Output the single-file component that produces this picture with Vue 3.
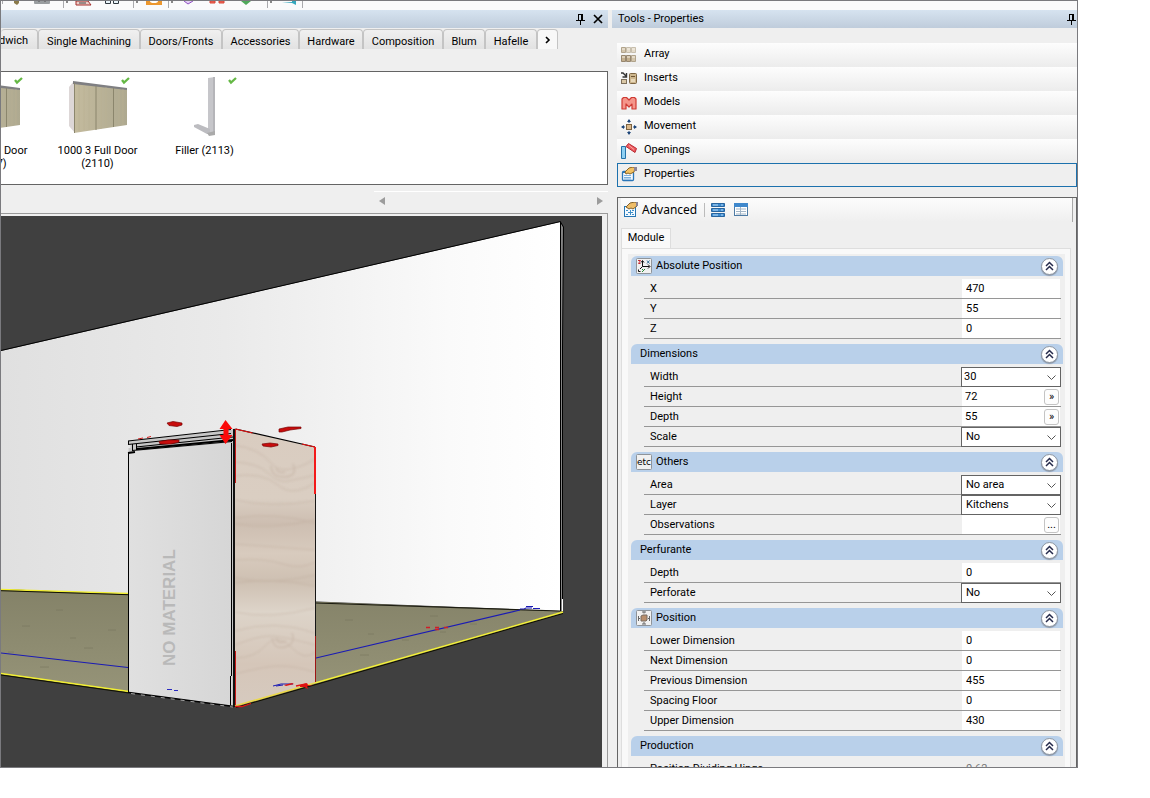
<script setup>
import { reactive, ref } from 'vue'

const tabs = ['Sandwich', 'Single Machining', 'Doors/Fronts', 'Accessories', 'Hardware', 'Composition', 'Blum', 'Hafelle']
const tools = ['Array', 'Inserts', 'Models', 'Movement', 'Openings', 'Properties']
const active = ref('Properties')

const items = [
  { name: '600 2 Full Door (2107)', kind: 'cabinet' },
  { name: '1000 3 Full Door (2110)', kind: 'cabinet' },
  { name: 'Filler (2113)', kind: 'filler' }
]

const sections = reactive([
  { title: 'Absolute Position', icon: 'axes', rows: [
    { label: 'X', value: '470' }, { label: 'Y', value: '55' }, { label: 'Z', value: '0' }] },
  { title: 'Dimensions', rows: [
    { label: 'Width', value: '30', options: ['30', '45', '60'], tight: true },
    { label: 'Height', value: '72', button: '»' },
    { label: 'Depth', value: '55', button: '»' },
    { label: 'Scale', value: 'No', options: ['No', 'Yes'] }] },
  { title: 'Others', icon: 'etc', rows: [
    { label: 'Area', value: 'No area', options: ['No area'] },
    { label: 'Layer', value: 'Kitchens', options: ['Kitchens'] },
    { label: 'Observations', value: '', button: '...' }] },
  { title: 'Perfurante', rows: [
    { label: 'Depth', value: '0' },
    { label: 'Perforate', value: 'No', options: ['No', 'Yes'] }] },
  { title: 'Position', icon: 'position', rows: [
    { label: 'Lower Dimension', value: '0' }, { label: 'Next Dimension', value: '0' },
    { label: 'Previous Dimension', value: '455' }, { label: 'Spacing Floor', value: '0' },
    { label: 'Upper Dimension', value: '430' }] },
  { title: 'Production', rows: [{ label: 'Position Dividing Hinge', value: '0.62', muted: true }] }
])
</script>

<template>
  <div class="window">
    <div class="strip">
      <svg width="310" height="9" viewBox="1 1 310 9" aria-hidden="true">
        <path d="M2.500 1v3M63.500 1v7M133.500 1v7M168.500 1v7M267.500 1v7M302.500 1v7" stroke="#a9a9ad" fill="none" />
        <path d="M66 1h2v2h-2zM136 1h2v2h-2zM171 1h2v2h-2zM270 1h2v2h-2z" fill="#888" />
        <path d="M14 1h5v2l-2 2-3-2z" fill="#8a7a4a" />
        <rect x="34" y="0" width="16" height="4" rx="1" fill="#999da0" /><path d="M38 1h2M44 1h2" stroke="#555" />
        <path d="M76 1h12l3 4H76z" fill="#eccfca" stroke="#a42c2a" /><path d="M79 3h7" stroke="#444" />
        <path d="M105.500 0v3.500h5V0M113.500 0v3.500h5V0" fill="#e8f4fa" stroke="#303840" />
        <rect x="146" y="1" width="16" height="4" fill="#ec972e" /><ellipse cx="154" cy="1" rx="4" ry="2" fill="#fff" />
        <path d="M184 1l4 3 5-3" fill="#e3d0f5" stroke="#8f4fc2" />
        <path d="M210 1h5v2h-5zM219 1h5v2h-5z" fill="#ef6a5c" stroke="#d84638" />
        <path d="M241 1h10l-5 4z" fill="#4fa85a" />
        <path d="M282 2h10v-1l4 0v4l-4-2" fill="#35a7bd" />
      </svg>
    </div>

    <main class="work">
      <section class="library" aria-label="Library">
        <header class="caption">
          <button class="cap-btn" aria-label="Pin library">
            <svg width="9" height="12" viewBox="0 0 9 12"><path d="M2.500 1v6M2 1.500h4M5.500 1v6M6.500 1v6M0 7.500h9M4.500 8v4" stroke="#000" fill="none" /></svg>
          </button>
          <button class="cap-btn" aria-label="Close library">
            <svg width="10" height="10" viewBox="0 0 10 10"><path d="M1 1l8 8M9 1l-8 8" stroke="#000" stroke-width="1.700" /></svg>
          </button>
        </header>

        <nav class="tabs">
          <button v-for="t in tabs" :key="t" class="tab" :class="{ cut: t === 'Sandwich' }">{{ t }}</button>
          <button class="tab more" aria-label="More tabs">
            <svg width="6" height="8" viewBox="0 0 6 8"><path d="M1 1l3 3-3 3" fill="none" stroke="#000" stroke-width="1.600" /></svg>
          </button>
        </nav>

        <div class="shelf">
          <figure v-for="it in items" :key="it.name" class="item">
            <svg width="107" height="66" viewBox="44 75 107 66" aria-hidden="true">
              <defs>
                <linearGradient id="oak" x1="0" x2="1"><stop offset="0" stop-color="#c4bb9e" /><stop offset="1" stop-color="#aea990" /></linearGradient>
              </defs>
              <g v-if="it.kind === 'cabinet'">
                <path d="M69 88l5-6 1 52-6-7z" fill="#ddd7d7" />
                <path d="M74 84l53 6v36l-53 8z" fill="url(#oak)" />
                <path d="M73 82l54 7v2l-54-6z" fill="#7f7f82" />
                <path d="M96 87v44M113.500 89v39M74.500 84v50" stroke="#8b866d" fill="none" />
                <path d="M79 86v46M84 86v45M89 87v44M101 88v42M106 88v41M119 90v37M123 90v36" stroke="#b9b092" opacity=".6" />
              </g>
              <g v-else>
                <path d="M101 79l7-1v55l-7 2z" fill="#c6c6ca" /><path d="M106 78h2v56l-2 1z" fill="#b5b5b9" />
                <path d="M87 126l4-1 12 5v5l-3 0-13-7z" fill="#bcbcc0" /><path d="M100 134l8-2v4l-6 1z" fill="#aaa" />
              </g>
              <path d="M122 81l2 2.500 5-4.500" fill="none" stroke="#65b845" stroke-width="2.300" />
            </svg>
            <figcaption>{{ it.name }}</figcaption>
          </figure>
        </div>

        <div class="scroller">
          <div class="track">
            <button class="arrow" aria-label="Scroll left"><svg width="7" height="8" viewBox="0 0 7 8"><path d="M6 0v8L0 4z" fill="#9c9c9c" /></svg></button>
            <button class="arrow" aria-label="Scroll right"><svg width="7" height="8" viewBox="0 0 7 8"><path d="M0 0v8l6-4z" fill="#9c9c9c" /></svg></button>
          </div>
        </div>

        <div class="viewport">
          <svg class="scene" viewBox="1 216 601 551" preserveAspectRatio="xMinYMin slice" role="img" aria-label="Cabinet in a room">
            <defs>
              <linearGradient id="wall" x1="0" x2="1"><stop offset="0" stop-color="#e0e0e0" /><stop offset=".4" stop-color="#eaeaea" /><stop offset=".8" stop-color="#fafafa" /><stop offset="1" stop-color="#fff" /></linearGradient>
              <linearGradient id="floor" x1="0" x2="0" y1="0" y2="1"><stop offset="0" stop-color="#848268" /><stop offset="1" stop-color="#98967a" /></linearGradient>
              <linearGradient id="front" x1="0" x2="1"><stop offset="0" stop-color="#e0e0e0" /><stop offset="1" stop-color="#d6d6d6" /></linearGradient>
              <linearGradient id="wood" x1="0" x2="0" y1="0" y2="1">
                <stop offset="0" stop-color="#d9ccc0" /><stop offset=".25" stop-color="#dacec2" /><stop offset=".34" stop-color="#cdbeb1" />
                <stop offset=".45" stop-color="#d8cbbe" /><stop offset=".55" stop-color="#cec0b2" /><stop offset=".66" stop-color="#ddd4c9" />
                <stop offset=".85" stop-color="#d5c6b9" /><stop offset="1" stop-color="#d6cabf" />
              </linearGradient>
              <filter id="soft"><feGaussianBlur stdDeviation="1" /></filter>
              <clipPath id="side"><path d="M235 429l80 18v236l-80 23z" /></clipPath>
            </defs>
            <rect x="1" y="216" width="1200" height="1100" fill="#404040" />
            <path d="M1 351L560 222V611L1 589z" fill="url(#wall)" />
            <path d="M560 222l3 5v384h-3z" fill="#858585" />
            <path d="M1 350.500L560.500 221.500V611M560.500 222l3 5-1 120v264" fill="none" stroke="#000" />
            <path d="M562.500 599v12" stroke="#fff" />
            <path d="M1 589l562 22.500L234 706 1 674z" fill="url(#floor)" />
            <path d="M316 603l244 8" stroke="#1c1c10" stroke-width="1.200" />
            <path d="M1 589.500l127 4M1 673.500l128 18" stroke="#f2ef32" stroke-width="1.400" fill="none" />
            <path d="M1 590.700l127 4M1 675l128 18M563 613.500L236 707.500" stroke="#101000" fill="none" />
            <path d="M563 612L315 683" stroke="#f5f23a" stroke-width="1.500" />
            <path d="M8 652h6M22 626h8M56 610h7M84 648h9M40 667h9M70 638h6M108 630h8M345 620h8M368 634h6M402 640h7M430 616h8M360 655h9M470 624h7M440 632h6" stroke="#77755c" opacity=".6" />
            <path d="M1 653l127 14.500M316 658l204-48M520 609h4l2-1h6M526 606.500h7M533 608.500h7" stroke="#1b1bb4" stroke-width="1.100" fill="none" />
            <path d="M426 627.500h4M435 627.500h4M435 629.500h4M444 627.500h4" stroke="#d01c28" stroke-width="1.600" />

            <path d="M128.500 441L231 430l4-2v278h-3V443l-103.500 9v-4h2v-3l-2-1z" fill="#c7c7c7" />
            <path d="M128.500 452.500L232 443v263l-103.500-13.500z" fill="url(#front)" />
            <path d="M128.500 453v240M231.500 443v233M230.500 676v29" stroke="#000" />
            <path d="M128 441l103-11.500M128 444.500l103-11M136 447l97-10M132 450.500l100-9" stroke="#000" stroke-width="1.200" fill="none" />
            <path d="M128.500 441v3M132.500 444v7M136.500 444v6" stroke="#000" />
            <path d="M128 453l7-1M137 449l96-9" stroke="#000" stroke-width="2" />
            <path d="M129 692.500l105 14" stroke="#000" stroke-width="1.300" />
            <path d="M131 693.500l102 13.500" stroke="#ddd" stroke-dasharray="4 6" stroke-width=".7" />
            <text class="watermark" transform="translate(175 666) rotate(-90)">NO MATERIAL</text>

            <path d="M235 429l80 18v236l-80 23z" fill="url(#wood)" />
            <g clip-path="url(#side)" fill="none" stroke="#b9a595" filter="url(#soft)" opacity=".42">
              <path d="M233 445q26 3 38 18t44-4M234 462q24 1 34 11t20 8 28-6M233 476q30-4 45 9t38-3M235 500q35 8 80 1M235 518q40-6 80 5M235 524q35 6 80-4M235 544q42 3 80 6M235 560q30-2 48 4t32-2M235 578q40 7 80-3M235 583q38-6 80 3M235 612q34 8 80-4M235 631q40-12 80 2M235 645q25-10 38-9t42 9M235 658q20 0 31-13t25 2 24 5M235 674q30-8 45-8t35 6" />
              <path d="M271 466q1 12 14 11t8-13M276 468q2 6 9 4M272 638q2 12 13 9t7-14M276 638q2 7 10 3" stroke-width="1.500" />
            </g>
            <path d="M235.500 429L315 447" stroke="#000" stroke-width="1.100" />
            <path d="M235.500 429l17 4M302 444l13 3" stroke="#e80e0e" stroke-width="1.200" />
            <path d="M315.500 447v235" stroke="#161616" />
            <path d="M315 447v47" stroke="#f31a1a" stroke-width="2" />
            <path d="M315.500 636v46" stroke="#9e1515" />
            <path d="M234 429v278" stroke="#111" stroke-width="2" />
            <path d="M235.500 429v54M235.500 651v56" stroke="#c91919" />
            <path d="M235 706l80-23" stroke="#ecd94a" stroke-width="1.700" /><path d="M235 706.500h7l9-3M296 686l10-2" stroke="#dc1616" stroke-width="1.300" fill="none" />
            <g fill="#c80c0c" stroke="#780505" stroke-width=".7">
              <path d="M167 423l6-1.500 9 1.500v2l-5 1.500-8-1z" /><path d="M159 441.500l9-1.500 11 0v2l-8 2-11 0z" />
              <path d="M262 444l8-1 8 1v1.500l-7 1.500-8-1z" /><path d="M279 429l9-2h13v1.500l-11 1.500-8 2h-3z" />
            </g>
            <path d="M225.500 420l7 9h-4v6h4l-7 9-6-9h4v-6h-4z" fill="#fb0a0a" />
            <path d="M273 686l8-2h12M276 686l7-1" stroke="#1b1bb4" fill="none" /><path d="M284 685l8-2 2 1-8 2zM300 685l7-2 1 2 5 1-6 0 1 3-4-2h-4z" fill="#df1212" />
            <path d="M167 689.500h5M174 690.500h4" stroke="#2929c0" />
            <path d="M138 439l5-1M147 437.500l4-1" stroke="#d41c1c" />
          </svg>
        </div>
      </section>

      <aside class="props" aria-label="Tools - Properties">
        <header class="caption title">
          <h1>Tools - Properties</h1>
          <button class="cap-btn" aria-label="Pin properties">
            <svg width="9" height="12" viewBox="0 0 9 12"><path d="M2.500 1v6M2 1.500h4M5.500 1v6M6.500 1v6M0 7.500h9M4.500 8v4" stroke="#000" fill="none" /></svg>
          </button>
        </header>

        <nav class="tools">
          <button v-for="t in tools" :key="t" class="tool" :class="{ on: t === active }" @click="active = t">
            <svg width="16" height="16" viewBox="0 0 16 16" aria-hidden="true">
              <template v-if="t === 'Array'">
                <g stroke-width=".8">
                  <path d="M.5 8.500h4v6h-4zM5.500 8.500h4v6h-4z" fill="#c3af8e" stroke="#85745a" /><path d="M10.500 8.500h4v6h-4zM.5 .5h4v5h-4z" fill="#d3c5ac" stroke="#a3947a" /><path d="M5.500 .5h4v5h-4zM10.500 .5h4v5h-4z" fill="#e4dbca" stroke="#bdb3a0" />
                </g>
                <path d="M1 10h3M6 10h3M11 10h3M1 2h3M6 2h3M11 2h3" stroke="#f5efe4" />
              </template>
              <template v-else-if="t === 'Inserts'">
                <path d="M0 2h2l3 3M5.500 2v4h-4" fill="none" stroke="#333" stroke-width="1.400" />
                <rect x=".5" y="8.500" width="5" height="4" fill="#d9c7a5" stroke="#7d6f5b" /><rect x="8.500" y="2.500" width="7" height="10" rx="1" fill="#cdb68d" stroke="#7d6542" /><path d="M10 5.500h4" stroke="#6d5430" /><path d="M10 8h4v3h-4z" fill="#e7d7b8" />
              </template>
              <path v-else-if="t === 'Models'" d="M1 14V4l1.500-1.500h3L8 5l2.500-2.500h3L15 4v10h-4V9L8 12 5 9v5z" fill="#f4958a" stroke="#cf3a33" stroke-width="1.200" stroke-linejoin="round" />
              <template v-else-if="t === 'Movement'">
                <rect x="5.500" y="5.500" width="5" height="5" fill="#dcb98b" stroke="#7d6340" />
                <path d="M8 0l2 3H6zM8 16l2-3H6zM0 8l3-2v4zM16 8l-3-2v4z" fill="#1c4478" /><path d="M8 1v3M8 12v3M1 8h3M12 8h3" stroke="#1c4478" />
              </template>
              <template v-else-if="t === 'Openings'">
                <path d="M.5 3.500h4v12h-4z" fill="#8fd0f2" stroke="#2572a8" /><path d="M5 3.500l2.500-3 8 5-1.500 4z" fill="#ee5a5e" stroke="#b82a33" /><path d="M8 2.500l5 4" stroke="#f7a9a4" />
              </template>
              <template v-else>
                <rect x="1.500" y="4.500" width="11" height="9" rx="1" fill="#f4f9ff" stroke="#2b76b8" stroke-width="1.300" /><path d="M2 5.500h10" stroke="#2b76b8" /><path d="M3 8.500h7M3 10.500h7M3 12h7" stroke="#7db0dd" />
                <path d="M4 5l4-4 4-1 2 1-1 4-4 2-2-1-2 1z" fill="#f3c163" stroke="#8a6424" /><path d="M13 0h3v4h-3z" fill="#8d8496" />
              </template>
            </svg>
            <span>{{ t }}</span>
          </button>
        </nav>

        <div class="panel">
          <div class="bar">
            <button class="adv">
              <svg width="16" height="16" viewBox="0 0 16 16" aria-hidden="true">
                <rect x="1.500" y="4.500" width="11" height="10" fill="#f4faff" stroke="#2676b4" /><path d="M3 8.500h2M9 8.500h2M3 12.500h2M9 12.500h2M7.500 8v5M5 10.500h5" stroke="#3f8fc8" />
                <path d="M3 5l4-4 5-1 2 1v3l-4 3-2-1-2 1z" fill="#efbd68" stroke="#80602b" /><path d="M13 0h2v4h-2z" fill="#8b8494" />
              </svg>
              <span>Advanced</span>
            </button>
            <i class="sep"></i>
            <button class="ico" aria-label="List view">
              <svg width="14" height="14" viewBox="0 0 14 14"><path d="M.5 .5h13v3H.5zM.5 5.500h13v3H.5zM.5 10.500h13v3H.5z" fill="#3b8ad0" stroke="#28659f" /><path d="M2 2h5M2 7h5M2 12h5M10 2h2M10 7h2M10 12h2" stroke="#b9dcf8" /></svg>
            </button>
            <button class="ico" aria-label="Table view">
              <svg width="14" height="14" viewBox="0 0 14 14"><rect x=".5" y=".5" width="13" height="12" fill="#fff" stroke="#4e7ba5" /><path d="M0 0h14v4H0z" fill="#3f88cc" /><path d="M2 6h10M2 8.500h10M2 11h10M6.500 4v8" stroke="#a3b6c7" /></svg>
            </button>
          </div>

          <div class="page-tabs"><button class="page-tab">Module</button></div>

          <div class="page">
            <div class="sheet">
              <section v-for="s in sections" :key="s.title" class="group">
                <h2 class="head">
                  <svg v-if="s.icon" width="16" height="16" viewBox="0 0 16 16" aria-hidden="true">
                    <rect x=".5" y=".5" width="15" height="15" rx="1" fill="#f1f1f1" stroke="#8f9499" />
                    <template v-if="s.icon === 'axes'">
                      <path d="M6.500 3v5.500h7M6.500 8.500L4 11" fill="none" stroke="#111" /><path d="M5 4.500l1.500-2 1.500 2M12 6.500l2 2-2 2" fill="none" stroke="#111" /><path d="M2 2.500h2.500l-2 3h2" fill="none" stroke="#c22b35" /><path d="M11 2.500l2.500 3M13.500 2.500l-2.500 3" stroke="#2f6c94" /><path d="M6 14l3-3M6 11l1 1" stroke="#248a37" /><path d="M2.500 11.500v2h2" fill="none" stroke="#111" />
                    </template>
                    <text v-else-if="s.icon === 'etc'" class="etc" x="8" y="11" text-anchor="middle">etc</text>
                    <template v-else>
                      <path d="M5 6l2-1h4v5l-1 1H5z" fill="#b98f6d" stroke="#786c62" /><path d="M8 1.500v2M6 2h4M8 12v2M6 14h4M2.500 6v5M3 8.500h1M13.500 6v5M12 8.500h1" stroke="#666" />
                    </template>
                  </svg>
                  <span>{{ s.title }}</span>
                  <button class="fold" :aria-label="'Collapse ' + s.title">
                    <svg width="9" height="10" viewBox="0 0 9 10"><path d="M1 5l3.500-3.500L8 5M1 9l3.500-3.500L8 9" fill="none" stroke="#262b4c" stroke-width="1.500" /></svg>
                  </button>
                </h2>
                <div class="rows">
                  <div v-for="r in s.rows" :key="r.label" class="row">
                    <label :for="s.title + r.label">{{ r.label }}</label>
                    <div v-if="r.options" class="cell combo">
                      <select :id="s.title + r.label" v-model="r.value" :class="{ tight: r.tight }">
                        <option v-for="o in r.options" :key="o">{{ o }}</option>
                      </select>
                      <svg class="chev" width="9" height="6" viewBox="0 0 9 6" aria-hidden="true"><path d="M.5 .5l4 4 4-4" fill="none" stroke="#555" /></svg>
                    </div>
                    <div v-else class="cell" :class="{ muted: r.muted }">
                      <input :id="s.title + r.label" v-model="r.value" type="text" :class="{ snug: r.button }" />
                      <button v-if="r.button" class="dots" :aria-label="'Edit ' + r.label">{{ r.button }}</button>
                    </div>
                  </div>
                </div>
              </section>
            </div>
          </div>
        </div>
      </aside>
    </main>
  </div>
</template>

<style>
body { background: #fff; }
#app { min-height: 100vh; }
</style>

<style scoped>
* { box-sizing: border-box; }
button, input, select, h1, h2, figure { font: inherit; color: inherit; margin: 0; padding: 0; border: 0; background: none; }
svg { flex: none; display: block; }
.window {
  display: flex; flex-direction: column; width: calc(100vw - 72px); height: calc(100vh - 30px);
  border: 1px solid #7a7a7e; background: #efefef; overflow: hidden;
  font-family: Roboto, "Liberation Sans", sans-serif; font-size: 11px; line-height: 14px; color: #000;
}
.strip { flex: none; height: 9px; background: #fafafb; overflow: hidden; }
.work { flex: 1; min-height: 0; display: grid; grid-template-columns: minmax(0, 1fr) 465px; }
.library { display: flex; flex-direction: column; min-width: 0; min-height: 0; padding-right: 4px; }
.caption { flex: none; display: flex; align-items: center; justify-content: flex-end; gap: 8px; height: 18px; padding-right: 5px; background: linear-gradient(#d6e3f0, #bfccdb); }
.cap-btn { display: flex; }
.tabs { flex: none; display: grid; grid-template-columns: 37px 102px 82px 77px 64px 80px 42px 52px 21px; height: 20px; margin-top: 1px; overflow: hidden; }
.tab { border: 1px solid #c4c4c4; border-bottom: 0; border-radius: 4px 4px 0 0; background: linear-gradient(#f0f0f0, #e2e2e2); text-align: center; white-space: nowrap; padding-top: 4px; }
.tab.cut { display: flex; justify-content: flex-end; padding-right: 9px; border-left: 0; }
.tab.more { display: flex; justify-content: center; padding-top: 6px; background: #f8f8f8; }
.shelf { flex: none; display: flex; height: 114px; margin-top: 22px; padding-top: 2px; border: 1px solid #646464; border-left: 0; background: #fff; overflow: hidden; }
.item { flex: none; width: 107px; text-align: center; line-height: 13px; }
.item:first-child { margin-left: -64px; }
.item figcaption { width: 84px; margin: 4px auto 0; }
.scroller { flex: none; display: flex; justify-content: flex-end; height: 28px; padding-top: 6px; }
.track { display: flex; align-items: center; justify-content: space-between; width: 234px; height: 18px; padding: 0 4px 0 5px; border-top: 1px solid #fff; }
.arrow { display: flex; }
.viewport { flex: 1; min-height: 0; padding: 2px 5px 0 0; border-top: 1px solid #9a9a9a; border-right: 1px solid #9a9a9a; overflow: hidden; }
.scene { width: 100%; height: 100%; }
.watermark { font: bold 17px "Liberation Sans", sans-serif; fill: #b9b9b9; }

.props { display: flex; flex-direction: column; min-width: 0; min-height: 0; }
.title { justify-content: space-between; padding: 0 1px 0 6px; }
.title h1 { font-weight: 400; }
.tools { flex: none; margin: 15px 0 0 5px; }
.tool { display: flex; align-items: center; gap: 7px; width: 100%; height: 24px; padding: 0 4px; background: linear-gradient(#fdfdfd, #ececec); text-align: left; }
.tool.on { border: 1px solid #1c71ad; padding: 0 3px; background: #efefef; }
.tool span { padding-bottom: 2px; }
.panel { flex: 1; min-height: 0; display: flex; flex-direction: column; margin: 10px 0 0 5px; padding: 0 3px; border: 1px solid #646464; border-bottom: 0; overflow: hidden; }
.bar { flex: none; display: flex; align-items: center; height: 24px; padding-left: 2px; background: linear-gradient(#fcfcfc, #efefef); border-right: 1px solid #a8a8a8; }
.adv { display: flex; align-items: center; gap: 3px; font-family: "Noto Sans", "Open Sans", sans-serif; font-size: 12px; }
.sep { width: 1px; height: 14px; margin: 0 6px 0 7px; background: #bbb; }
.ico { display: flex; margin-right: 9px; }
.page-tabs { flex: none; display: flex; margin-top: 6px; height: 20px; }
.page-tab { width: 50px; background: #f9f9f9; border: 1px solid #ddd; border-bottom: 0; padding-bottom: 1px; }
.page { flex: 1; min-height: 0; margin-right: 2px; padding: 5px 5px 0 6px; border: 1px solid #dedede; border-bottom: 0; background: #f9f9f9; overflow: hidden; }
.sheet { height: 100%; padding: 2px 2px 0 3px; background: #efefef; overflow: hidden; }
.group { margin-bottom: 5px; }
.head { display: flex; align-items: center; gap: 4px; height: 20px; padding: 0 5px 0 5px; border-radius: 6px 6px 0 0; background: #b9d0ea; font-weight: 400; }
.head > span { padding-left: 4px; padding-bottom: 1px; }
.head svg + span { padding-left: 0; }
.fold { display: flex; align-items: center; justify-content: center; width: 17px; height: 17px; margin-left: auto; border: 1px solid #8e97a3; border-radius: 50%; background: #fff; box-shadow: 0 1px 1px #8b97a8; }
.rows { margin: 3px 2px 0 13px; }
.row { display: flex; height: 20px; border-bottom: 1px solid #969696; }
.row label { flex: 1; padding: 3px 0 0 6px; }
.cell { display: flex; align-items: center; width: 100px; border-left: 1px solid #efefef; border-right: 1px solid #efefef; background: #fff; }
.cell input { flex: 1; min-width: 0; width: 10px; height: 18px; padding-left: 4px; outline: 0; }
.cell input.snug { padding-left: 3px; }
.cell.muted { background: none; color: #777; }
.combo { position: relative; height: 20px; border: 1px solid #646464; }
.combo select { width: 100%; height: 18px; padding: 0 0 1px 4px; appearance: none; outline: 0; }
.combo select.tight { padding-left: 2px; }
.chev { position: absolute; right: 4px; top: 7px; pointer-events: none; }
.dots { width: 15px; height: 16px; margin-right: 1px; border: 1px solid #c4c4c4; border-radius: 3px; background: #fdfdfd; line-height: 12px; }
.etc { font: 9px "DejaVu Sans", sans-serif; fill: #000; }
</style>
